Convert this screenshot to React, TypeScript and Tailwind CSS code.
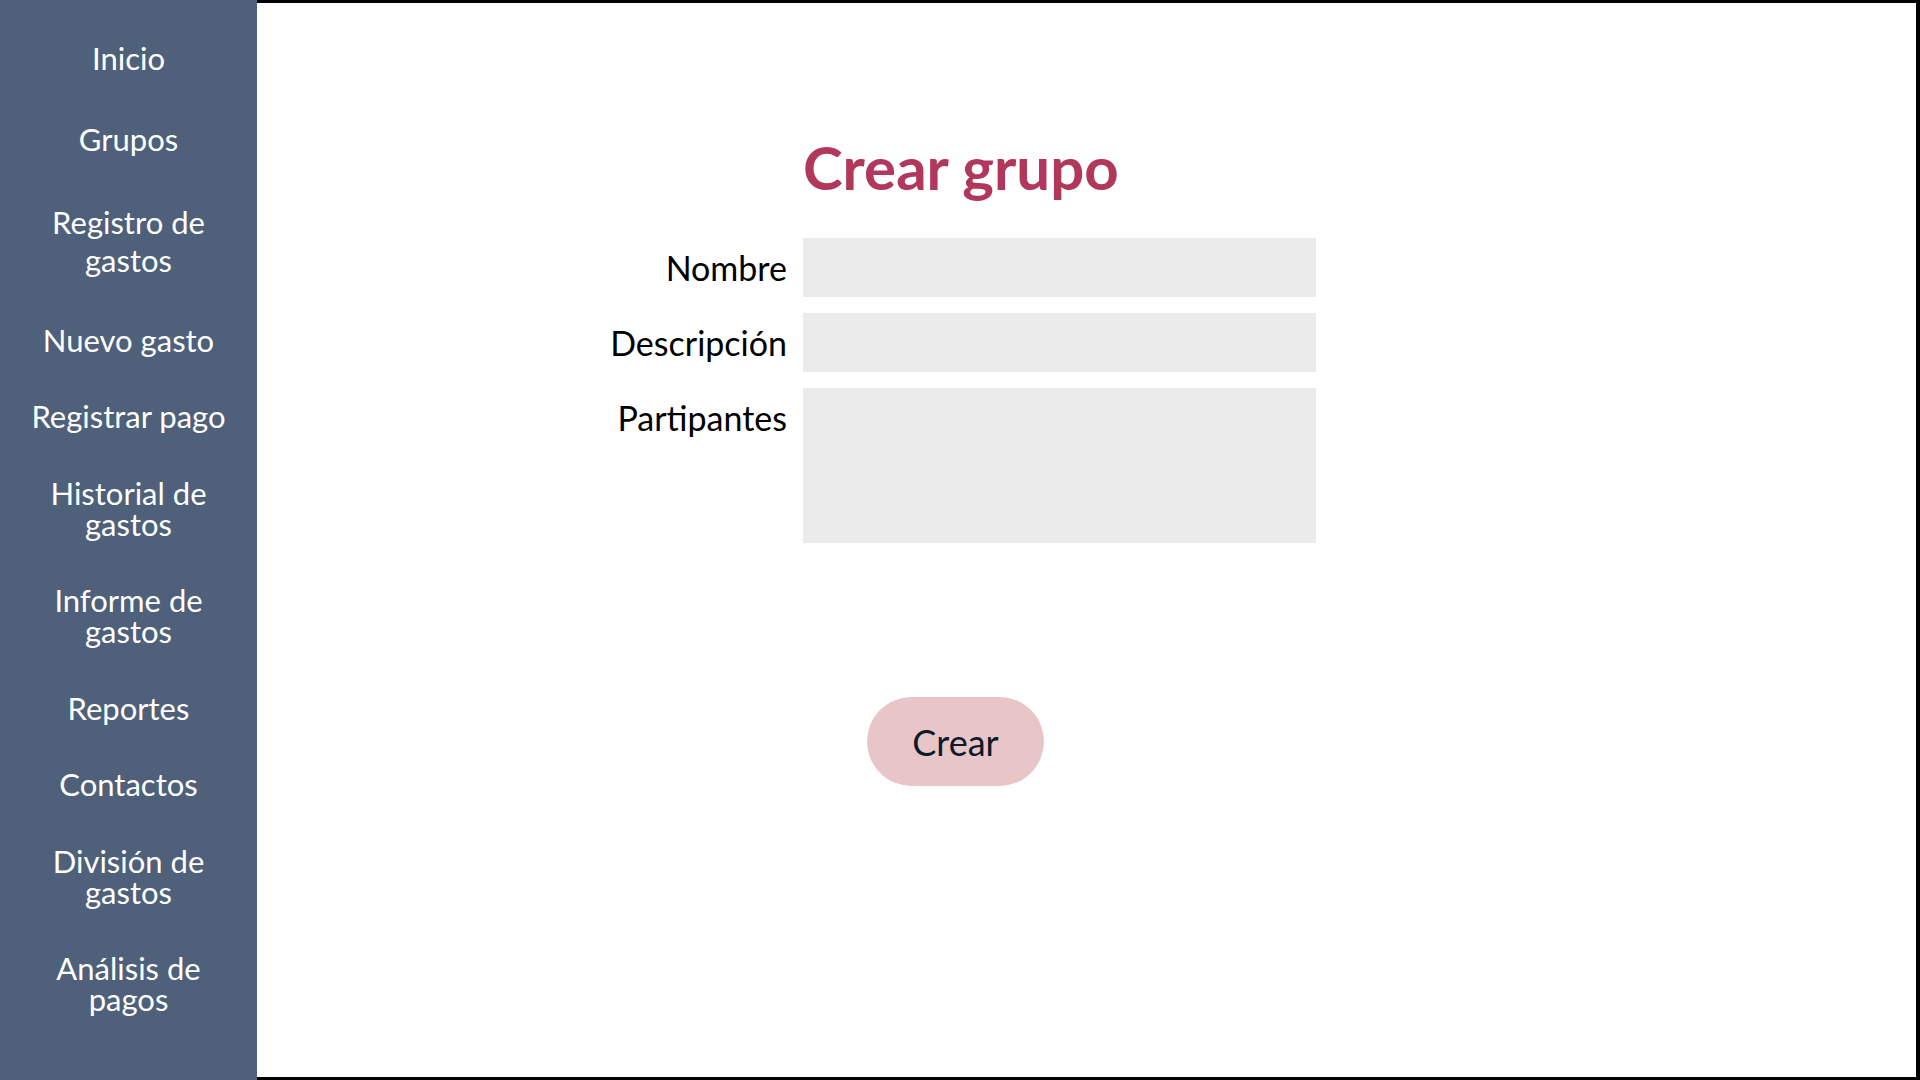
import React from "react";

const navItems = [
  { label: "Inicio", cls: "mb-[4px]" },
  { label: "Grupos", cls: "mb-[3px]" },
  { label: "Registro de gastos", cls: "leading-[38px] px-10" },
  { label: "Nuevo gasto", cls: "" },
  { label: "Registrar pago", cls: "" },
  { label: "Historial de gastos", cls: "px-10" },
  { label: "Informe de gastos", cls: "px-10" },
  { label: "Reportes", cls: "" },
  { label: "Contactos", cls: "" },
  { label: "División de gastos", cls: "px-10" },
  { label: "Análisis de pagos", cls: "px-10" },
];

function Sidebar() {
  return (
    <aside className="w-[257px] shrink-0 bg-[#4e607a] text-white">
      <nav className="flex flex-col items-center gap-[45.5px] pt-[43px]">
        {navItems.map((item) => (
          <a
            key={item.label}
            href="#"
            className={`block w-full text-center text-[31px] leading-[31px] ${item.cls}`}
          >
            {item.label}
          </a>
        ))}
      </nav>
    </aside>
  );
}

export default function App() {
  return (
    <div className="flex h-[1080px] w-[1920px] font-['Lato',sans-serif]">
      <Sidebar />

      {/* MAIN */}
      <main className="flex-1 bg-white border-t-[3px] border-r-[4px] border-b-[3px] border-black">
        <div className="ml-[546px] pt-[134px]">
          <h1 className="text-[60px] leading-none font-bold text-[#b1375b] mb-[41px]">
            Crear grupo
          </h1>
        </div>

        <form className="grid grid-cols-[200px_513px] gap-x-4 gap-y-4 ml-[330px]">
          <label className="text-right text-[34px] leading-[59px] text-black">
            Nombre
          </label>
          <input className="h-[59px] bg-[#ebebeb] outline-none" />

          <label className="text-right text-[34px] leading-[59px] text-black">
            Descripción
          </label>
          <input className="h-[59px] bg-[#ebebeb] outline-none" />

          <label className="text-right text-[34px] leading-[59px] text-black">
            Partipantes
          </label>
          <textarea className="h-[155px] bg-[#ebebeb] outline-none resize-none" />
        </form>

        <div className="ml-[610px] mt-[154px]">
          <button className="w-[177px] h-[89px] rounded-full bg-[#e8c6c8] text-[36px] text-[#0e1a2c]">
            Crear
          </button>
        </div>
      </main>
    </div>
  );
}
